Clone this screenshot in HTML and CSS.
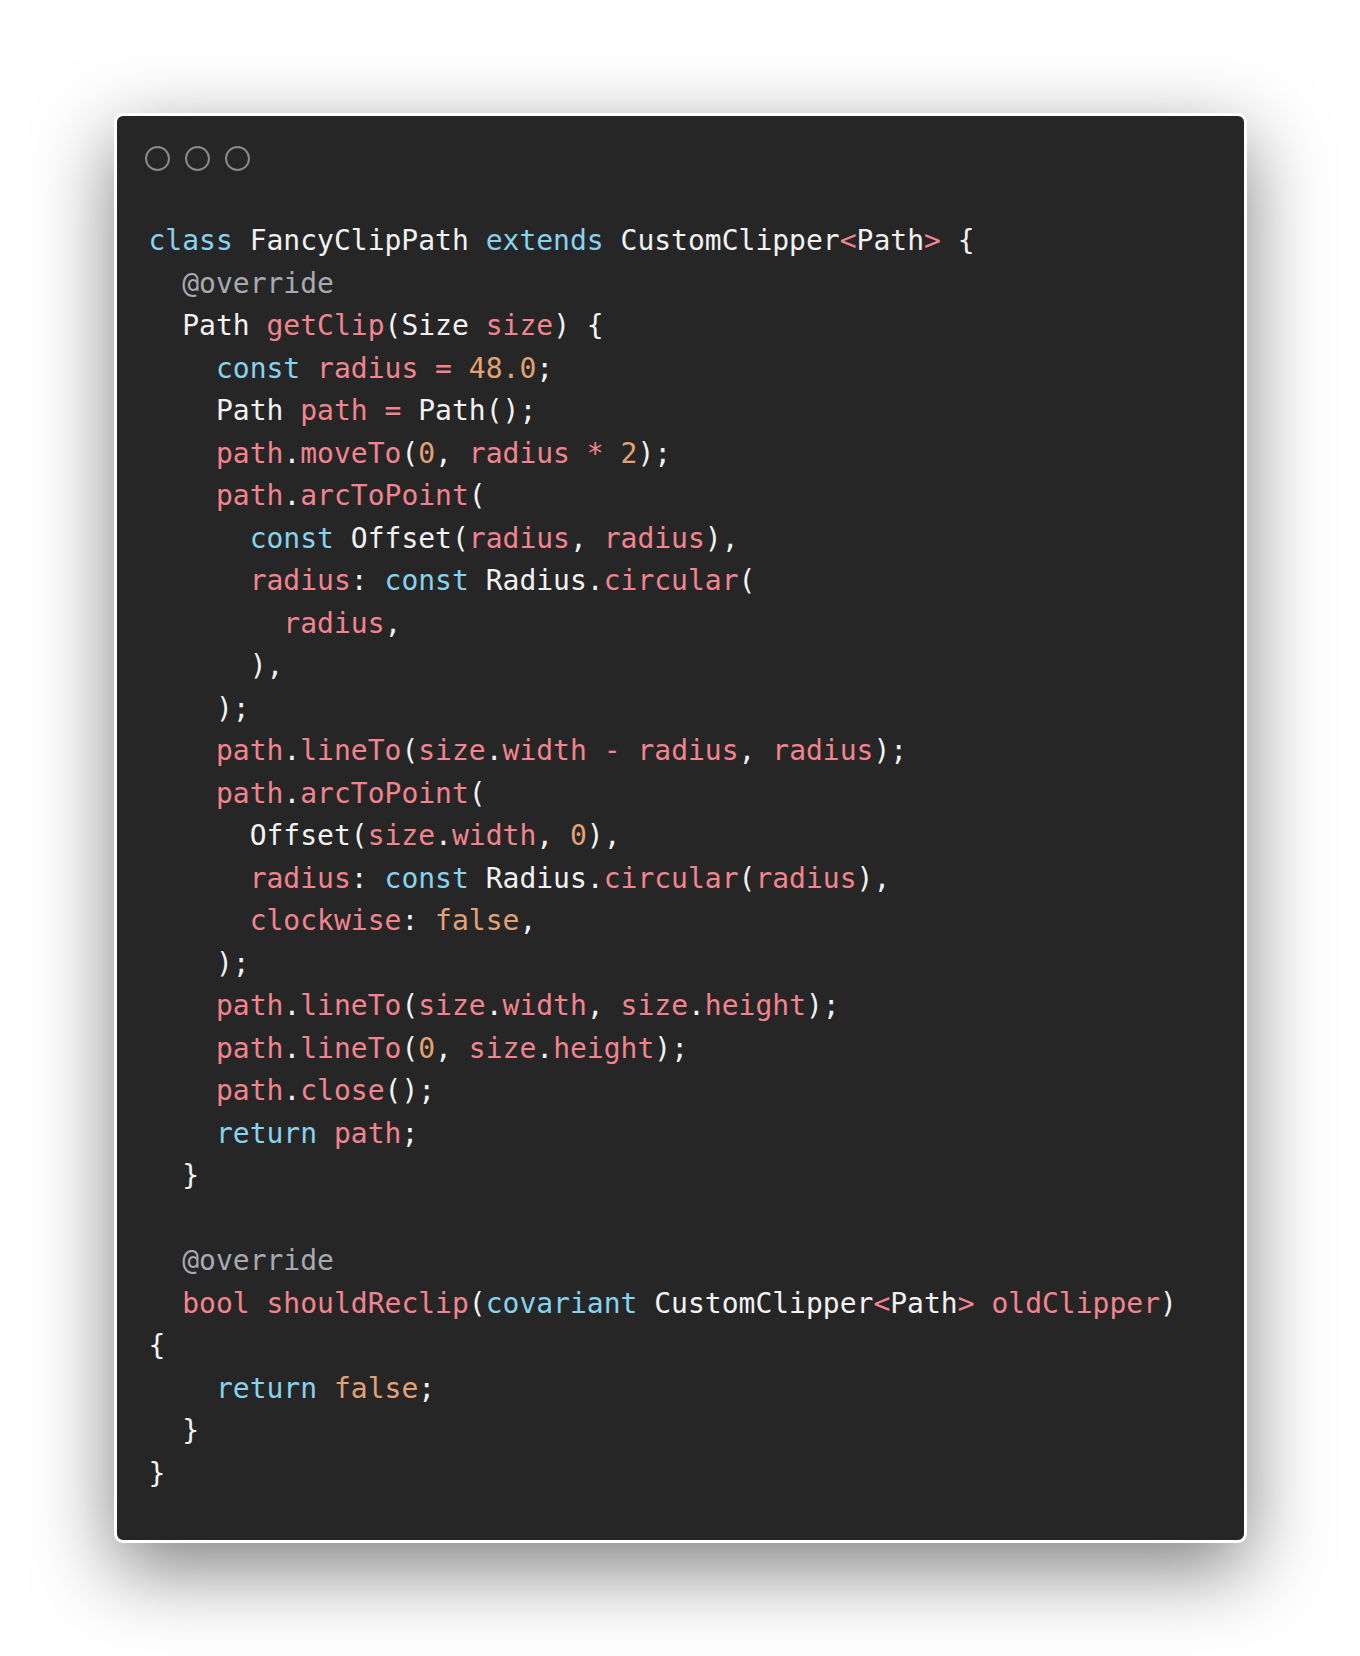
FILE: index.html
```html
<!DOCTYPE html>
<html lang="en">
<head>
<meta charset="utf-8">
<title>FancyClipPath</title>
<link rel="stylesheet" href="styles.css">
</head>
<body>
<div class="stage">
  <div class="window">
    <div class="titlebar">
      <span class="dot"></span>
      <span class="dot"></span>
      <span class="dot"></span>
    </div>
<pre class="code"><span class="k">class</span> FancyClipPath <span class="k">extends</span> CustomClipper<span class="p">&lt;</span>Path<span class="p">&gt;</span> {
  <span class="c">@override</span>
  Path <span class="p">getClip</span>(Size <span class="p">size</span>) {
    <span class="k">const</span> <span class="p">radius</span> <span class="p">=</span> <span class="n">48.0</span>;
    Path <span class="p">path</span> <span class="p">=</span> Path();
    <span class="p">path</span>.<span class="p">moveTo</span>(<span class="n">0</span>, <span class="p">radius</span> <span class="p">*</span> <span class="n">2</span>);
    <span class="p">path</span>.<span class="p">arcToPoint</span>(
      <span class="k">const</span> Offset(<span class="p">radius</span>, <span class="p">radius</span>),
      <span class="p">radius</span>: <span class="k">const</span> Radius.<span class="p">circular</span>(
        <span class="p">radius</span>,
      ),
    );
    <span class="p">path</span>.<span class="p">lineTo</span>(<span class="p">size</span>.<span class="p">width</span> <span class="p">-</span> <span class="p">radius</span>, <span class="p">radius</span>);
    <span class="p">path</span>.<span class="p">arcToPoint</span>(
      Offset(<span class="p">size</span>.<span class="p">width</span>, <span class="n">0</span>),
      <span class="p">radius</span>: <span class="k">const</span> Radius.<span class="p">circular</span>(<span class="p">radius</span>),
      <span class="p">clockwise</span>: <span class="n">false</span>,
    );
    <span class="p">path</span>.<span class="p">lineTo</span>(<span class="p">size</span>.<span class="p">width</span>, <span class="p">size</span>.<span class="p">height</span>);
    <span class="p">path</span>.<span class="p">lineTo</span>(<span class="n">0</span>, <span class="p">size</span>.<span class="p">height</span>);
    <span class="p">path</span>.<span class="p">close</span>();
    <span class="k">return</span> <span class="p">path</span>;
  }

  <span class="c">@override</span>
  <span class="p">bool</span> <span class="p">shouldReclip</span>(<span class="k">covariant</span> CustomClipper<span class="p">&lt;</span>Path<span class="p">&gt;</span> <span class="p">oldClipper</span>)
{
    <span class="k">return</span> <span class="n">false</span>;
  }
}</pre>
  </div>
</div>
</body>
</html>
```

FILE: styles.css
```css
html, body {
  margin: 0;
  padding: 0;
  background: #ffffff;
}

.stage {
  min-height: 1656px;
  display: flex;
  align-items: center;
  justify-content: center;
}

.window {
  box-sizing: border-box;
  width: 1133px;
  background: #262626;
  border: 3px solid #ffffff;
  border-radius: 9px;
  box-shadow: 0 26px 80px rgba(0, 0, 0, 0.5);
  padding: 30px 30px 45px 32px;
}

.titlebar {
  display: flex;
  gap: 15px;
  height: 25px;
  margin-left: -4px;
}

.dot {
  box-sizing: border-box;
  width: 25px;
  height: 25px;
  border: 2px solid #8b8b8b;
  border-radius: 50%;
}

.code {
  margin: 49px 0 0 0;
  font-family: "DejaVu Sans Mono", "Liberation Mono", monospace;
  font-size: 28px;
  line-height: 42.5px;
  color: #f2f2f2;
  white-space: pre;
}

.k { color: #86d3f0; }
.p { color: #f2848f; }
.n { color: #e3a273; }
.c { color: #a6aab1; }
```
